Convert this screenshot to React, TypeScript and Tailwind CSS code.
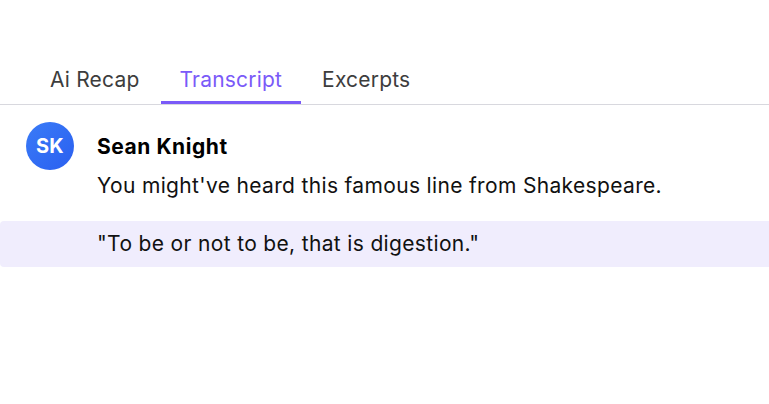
import React from 'react';

const tabs = ['Ai Recap', 'Transcript', 'Excerpts'];

const App: React.FC = () => {
  const active = 'Transcript';

  return (
    <div className="w-[769px] h-[404px] bg-white font-['Inter',sans-serif] overflow-hidden">
      {/* Tabs */}
      <div className="pt-[60px] border-b border-[#d8d8de] flex pl-[31px] gap-[2px]">
        {tabs.map((t) => (
          <div
            key={t}
            className={
              t === active
                ? 'px-[19px] h-[44px] flex items-center text-[21px] tracking-[0.2px] text-[#7a5af8] border-b-[3px] border-[#7a5af8] pb-[2px]'
                : 'px-[19px] h-[44px] flex items-center text-[21px] tracking-[0.2px] text-[#3d3d3d] border-b-[3px] border-transparent pb-[2px]'
            }
          >
            {t}
          </div>
        ))}
      </div>

      {/* Transcript entry */}
      <div className="flex pt-[17px] pl-[26px] gap-[23px]">
        <div className="w-[48px] h-[48px] rounded-full bg-gradient-to-br from-[#3a7bf7] to-[#2b5ff0] flex items-center justify-center text-white font-bold text-[20px] tracking-[0.3px] shrink-0">
          SK
        </div>
        <div className="pt-[12px]">
          <div className="text-[21px] font-bold tracking-[0.55px] text-black leading-[26px]">Sean Knight</div>
          <div className="text-[21px] tracking-[0.34px] text-[#111] leading-[26px] mt-[13px]">
            You might've heard this famous line from Shakespeare.
          </div>
        </div>
      </div>
      <div className="mt-[22px] h-[46px] bg-[#f0edfd] rounded-l-[4px] flex items-center pl-[97px] text-[21px] tracking-[0.34px] text-[#111]">
        "To be or not to be, that is digestion."
      </div>
    </div>
  );
};

export default App;
